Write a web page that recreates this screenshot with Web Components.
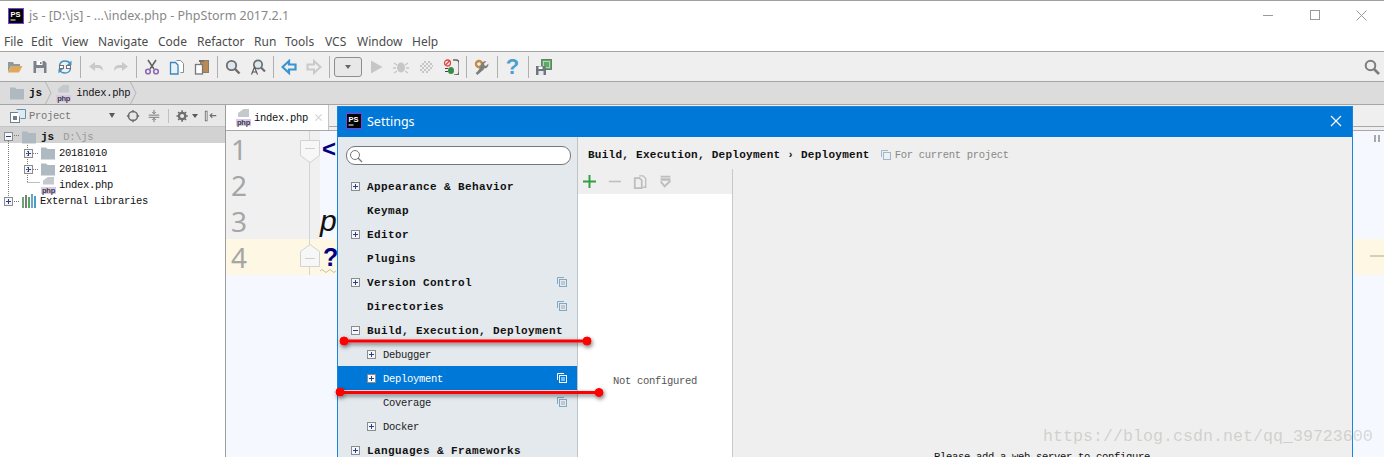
<!DOCTYPE html>
<html>
<head>
<meta charset="utf-8">
<title>PhpStorm settings</title>
<style>
  html, body { margin: 0; padding: 0; background: #fff; }
  body { width: 1384px; height: 457px; overflow: hidden; position: relative; display: flex; flex-direction: column; }
</style>
</head>
<body>
<ide-titlebar></ide-titlebar>
<ide-menubar></ide-menubar>
<ide-toolbar></ide-toolbar>
<ide-crumbs></ide-crumbs>
<ide-workspace>
  <project-panel></project-panel>
  <editor-pane></editor-pane>
</ide-workspace>
<settings-dialog>
  <settings-row slot="nav" bold toggle="plus">Appearance &amp; Behavior</settings-row>
  <settings-row slot="nav" bold>Keymap</settings-row>
  <settings-row slot="nav" bold toggle="plus">Editor</settings-row>
  <settings-row slot="nav" bold>Plugins</settings-row>
  <settings-row slot="nav" bold toggle="plus" project>Version Control</settings-row>
  <settings-row slot="nav" bold project>Directories</settings-row>
  <settings-row slot="nav" bold toggle="minus">Build, Execution, Deployment</settings-row>
  <settings-row slot="nav" sub toggle="plus">Debugger</settings-row>
  <settings-row slot="nav" sub toggle="plus" project selected>Deployment</settings-row>
  <settings-row slot="nav" sub project>Coverage</settings-row>
  <settings-row slot="nav" sub toggle="plus">Docker</settings-row>
  <settings-row slot="nav" bold toggle="plus">Languages &amp; Frameworks</settings-row>
</settings-dialog>
<red-marks></red-marks>
<blog-mark>https://blog.csdn.net/qq_39723600</blog-mark>

<script>
const MONO = '"Liberation Mono", "Noto Sans CJK SC", monospace';

const ICONS = {
  ps: `<rect x=".5" y=".5" width="15" height="15" fill="#000" stroke="#7d3fe0"/><text x="2.400" y="8.600" font-family="Liberation Sans, sans-serif" font-size="7.500" font-weight="700" fill="#fff">PS</text><rect x="2.500" y="11.500" width="5" height="1" fill="#fff"/>`,
  open: `<path d="M1 3h5l1 2h6v2H4l-3 6z" fill="#8e99a2"/><path d="M4 7h11.500L12 13.500H1z" fill="#dfa95b"/>`,
  save: `<path d="M1.500 2h11L14.500 4v10h-13z" fill="#7b8187"/><rect x="4.500" y="2" width="6" height="4" fill="#fff"/><rect x="8" y="3" width="1.500" height="2" fill="#7b8187"/><rect x="4" y="9" width="8" height="5" fill="#e6eaee"/>`,
  sync: `<path d="M2.500 6.500C3 3.500 5 2 8 2s4.500 1 5.500 3" fill="none" stroke="#3f93c9" stroke-width="1.500"/><path d="M13.500 9.500C13 12.500 11 14 8 14s-4.500-1-5.500-3" fill="none" stroke="#3f93c9" stroke-width="1.500"/><path d="M14.500 1.500v4.500H10zM1.500 14.500V10H6z" fill="#3f93c9"/><rect x="2.500" y="6.500" width="4" height="3" fill="#fff" stroke="#707070"/><rect x="9.500" y="6.500" width="4" height="3" fill="#fff" stroke="#707070"/>`,
  undo: `<path d="M7 3v3h3c3 0 5 2 5 6-1.500-2-3-3-5-3H7v3L1 7.500z" fill="#c9c9c9"/>`,
  redo: `<path d="M9 3v3H6c-3 0-5 2-5 6 1.500-2 3-3 5-3h3v3l6-4.500z" fill="#c9c9c9"/>`,
  cut: `<path d="M4 1l6 9M12 1l-6 9" stroke="#5f5f5f" stroke-width="1.500" fill="none"/><circle cx="4" cy="12.500" r="2.300" fill="none" stroke="#8c6bb5" stroke-width="1.600"/><circle cx="12" cy="12.500" r="2.300" fill="none" stroke="#8c6bb5" stroke-width="1.600"/>`,
  copy: `<path d="M7.500 1.500h4l3 3v9h-3" fill="#fff" stroke="#8b8b8b"/><path d="M1.500 3.500h5l2.500 2.500v9H1.500z" fill="#e8f2f9" stroke="#3f86b8" stroke-width="1.300"/>`,
  paste: `<rect x="6.500" y="1.500" width="8" height="12" fill="#b98a56" stroke="#8c7a66"/><rect x="5" y="1" width="5" height="2" fill="#707070"/><rect x="1.500" y="5.500" width="7" height="9.500" fill="#fff" stroke="#777" stroke-width="1.300"/>`,
  find: `<circle cx="6.500" cy="6.500" r="4.700" fill="#dce8f0" stroke="#6d6d6d" stroke-width="1.800"/><path d="M10 10l4.500 4.500" stroke="#6d6d6d" stroke-width="2.400"/>`,
  replace: `<circle cx="8" cy="5.500" r="4.200" fill="#dce8f0" stroke="#6d6d6d" stroke-width="1.700"/><path d="M11 8.500l4 4" stroke="#6d6d6d" stroke-width="2.200"/><path d="M1.500 15.500L4.500 8l3 7.500M2.700 13h3.600" fill="none" stroke="#555" stroke-width="1.100"/>`,
  back: `<path d="M8 2L1.500 8 8 14v-3.500h6.500v-5H8z" fill="none" stroke="#3b94cf" stroke-width="2.200"/>`,
  forward: `<path d="M8 2l6.500 6L8 14v-3.500H1.500v-5H8z" fill="none" stroke="#c9c9c9" stroke-width="2"/>`,
  run: `<path d="M3 1.500L14.500 8 3 14.500z" fill="#c6c6c6"/>`,
  debug: `<ellipse cx="8" cy="8.500" rx="4" ry="5" fill="#c6c6c6"/><path d="M1 4l3 2M15 4l-3 2M0 9h3M16 9h-3M1 14l3-2M15 14l-3-2" stroke="#c6c6c6" stroke-width="1.300"/>`,
  cover: `<path d="M2 6h2v2H2zM2 10h2v2H2zM4 4h2v2H4zM4 8h2v2H4zM4 12h2v2H4zM6 2h2v2H6zM6 6h2v2H6zM6 10h2v2H6zM8 4h2v2H8zM8 8h2v2H8zM8 12h2v2H8zM10 2h2v2h-2zM10 6h2v2h-2zM10 10h2v2h-2zM12 4h2v2h-2zM12 8h2v2h-2zM14 6h1v2h-1z" fill="#c6c6c6"/>`,
  attach: `<circle cx="4.500" cy="4" r="3" fill="none" stroke="#e2483d" stroke-width="1.300"/><path d="M2.500 6l4-4" stroke="#e2483d" stroke-width="1.200"/><path d="M2 9h3v1H2zM2 12h3v1H2z" fill="#444"/><ellipse cx="8" cy="11.500" rx="3" ry="3.500" fill="#3a8a4a"/><path d="M10 1h3a3 3 0 0 1 3 3v9a3 3 0 0 1-3 3h-2" fill="none" stroke="#666" stroke-width="1.300"/>`,
  tools: `<circle cx="5" cy="5" r="3" fill="none" stroke="#c38b46" stroke-width="2.400"/><path d="M3 14.500l6.500-5.500c1 .3 3 .5 4-1 1-1.200 1-2.500.8-3.500L12 7l-1.700-.7L10 4.500 12.500 2.500c-1.500-.5-3.500 0-4.500 1.500" fill="#7d7d7d"/><path d="M2.500 15l7-6" stroke="#7d7d7d" stroke-width="2.500"/>`,
  chipsave: `<rect x="5.500" y=".5" width="10" height="10" fill="#5fa868" stroke="#2f2f2f" stroke-dasharray="1 1"/><rect x="7.500" y="2.500" width="6" height="6" fill="none" stroke="#a8dbae"/><path d="M0 7h8.500L10 8.500V16H0z" fill="#6f767c"/><rect x="2.500" y="7.500" width="4" height="2.500" fill="#fff"/><rect x="2.500" y="12" width="5" height="4" fill="#e6eaee"/>`,
  search: `<circle cx="6.500" cy="6.500" r="4.800" fill="none" stroke="#7d7d7d" stroke-width="2"/><path d="M10 10l5 5" stroke="#7d7d7d" stroke-width="2.600"/>`,
  folder: `<path d="M1 2.500h5L7.500 4H15v10.500H1z" fill="#aeb9c0"/>`,
  project: `<rect x=".5" y="4.500" width="9" height="10" fill="#fff" stroke="#6f7f8c"/><rect x="3" y="8" width="4" height="4" fill="#6f7f8c"/><path d="M6.500 1.500h9v9h-5" fill="#dfeaf2" stroke="#5f92b5"/>`,
  target: `<circle cx="8" cy="8" r="5.200" fill="none" stroke="#6e6e6e" stroke-width="1.800"/><path d="M8 1v3M8 12v3M1 8h3M12 8h3" stroke="#6e6e6e" stroke-width="1.600"/>`,
  collapse: `<path d="M2 7h12M2 9.500h12" stroke="#6e6e6e"/><path d="M8 1v4M6 3.500l2 2 2-2M8 15v-4M6 12.500l2-2 2 2" fill="none" stroke="#6e6e6e"/>`,
  gear: `<circle cx="7" cy="8" r="3.700" fill="none" stroke="#6e6e6e" stroke-width="2.600"/><path d="M7 1.500v2.500M7 12v2.500M.5 8H3M11 8h2.500M2.400 3.400l1.800 1.800M9.800 10.800l1.800 1.800M2.400 12.600l1.800-1.800M9.800 5.200l1.800-1.800" stroke="#6e6e6e" stroke-width="1.800"/>`,
  hide: `<rect x="1.500" y="2.500" width="2" height="11" fill="#fff" stroke="#6e6e6e"/><path d="M14 7.500H7M9.500 5L7 7.500 9.500 10" fill="none" stroke="#6e6e6e" stroke-width="1.300"/>`,
  libs: `<rect x="1" y="4" width="2" height="11" fill="#6aa66f"/><rect x="4" y="2" width="2" height="13" fill="#7d7d7d"/><rect x="7" y="4" width="2" height="11" fill="#58a55c"/><rect x="10" y="1" width="2" height="14" fill="#6aa5c9"/><rect x="13" y="3" width="2" height="12" fill="#4e9bc7"/>`,
  plus: `<path d="M8 0v16M0 8h16" stroke="#2ea043" stroke-width="2.400"/>`,
  minus: `<path d="M1 8h15" stroke="#c0c0c0" stroke-width="2"/>`,
  dup: `<path d="M7 1h4.500l3 3v10H11" fill="#efefef" stroke="#bdbdbd" stroke-width="1.500"/><path d="M2 3.500h5.500l2.500 2.500v9H2z" fill="#efefef" stroke="#bdbdbd" stroke-width="2"/>`,
  saveas: `<path d="M2 1h12v2H2zM2 4h12v3H2z" fill="#bdbdbd"/><path d="M2 8l5 6 7-7" fill="none" stroke="#bdbdbd" stroke-width="2.400"/>`,
  close: `<path d="M3.500 3.500l9 9M12.500 3.500l-9 9" stroke="#d2d2d2" stroke-width="1.600"/>`
};

class IdeIcon extends HTMLElement {
  connectedCallback() {
    const size = this.getAttribute('size') || 16;
    this.attachShadow({ mode: 'open' });
    this.shadowRoot.innerHTML = `
      <style>:host { display: inline-flex; flex: none; width: ${size}px; height: ${size}px; } svg { display: block; }</style>
      <svg width="${size}" height="${size}" viewBox="0 0 16 16">${ICONS[this.getAttribute('name')] || ''}</svg>`;
  }
}
customElements.define('ide-icon', IdeIcon);

class PhpIcon extends HTMLElement {
  constructor() {
    super();
    this.attachShadow({ mode: 'open' });
    this.shadowRoot.innerHTML = `
      <style>
        :host { display: inline-flex; flex-direction: column; align-items: center; flex: none; width: 15px; height: 17px; }
        .doc { width: 11px; height: 8px; background: #c4c9cd; clip-path: polygon(50% 0, 100% 0, 100% 100%, 0 100%, 0 50%); }
        .tag { margin-top: 2px; width: 15px; height: 7px; background: #d8c9ec; color: #3a3a3a; font: 700 7.500px/7px "Liberation Sans", sans-serif; text-align: center; }
      </style>
      <div class="doc"></div><div class="tag">php</div>`;
  }
}
customElements.define('php-icon', PhpIcon);

class IdeTitlebar extends HTMLElement {
  constructor() {
    super();
    this.attachShadow({ mode: 'open' });
    this.shadowRoot.innerHTML = `
      <style>
        :host { display: flex; flex: none; align-items: center; height: 32px; box-sizing: content-box; border-top: 1px solid #a0a0a0; background: #fff; padding-left: 8px; }
        .in { display: flex; flex: 1; align-items: center; height: 29px; margin-bottom: 3px; }
        .title { margin-left: 5px; font: 12.500px "Noto Sans", sans-serif; color: #888; white-space: nowrap; }
        .btns { margin-left: auto; display: flex; align-items: center; }
        .btns svg { display: block; }
      </style>
      <div class="in">
      <ide-icon name="ps"></ide-icon>
      <span class="title">js - [D:\\js] - ...\\index.php - PhpStorm 2017.2.1</span>
      <div class="btns">
        <svg width="11" height="11" style="margin-right:36px"><path d="M0 5.500h10" stroke="#9a9a9a"/></svg>
        <svg width="11" height="11" style="margin-right:35px"><rect x=".5" y=".5" width="9" height="9" fill="none" stroke="#9a9a9a"/></svg>
        <svg width="11" height="11" style="margin-right:17px"><path d="M.5.500l10 10M10.500.500l-10 10" stroke="#9a9a9a"/></svg>
      </div>
      </div>`;
  }
}
customElements.define('ide-titlebar', IdeTitlebar);

class IdeMenubar extends HTMLElement {
  constructor() {
    super();
    this.attachShadow({ mode: 'open' });
    const items = [['File', 27], ['Edit', 31], ['View', 36], ['Navigate', 60], ['Code', 39], ['Refactor', 57], ['Run', 31], ['Tools', 40], ['VCS', 32], ['Window', 55], ['Help', 30]];
    this.shadowRoot.innerHTML = `
      <style>
        :host { display: flex; flex: none; align-items: center; height: 17px; padding: 0 0 1px 4px; background: #fff; border-bottom: 1px solid #a5a5a5; font: 12px "Noto Sans", sans-serif; color: #4c4c4c; }
        span { flex: none; }
      </style>
      ${items.map(([t, w]) => `<span style="width:${w}px">${t}</span>`).join('')}`;
  }
}
customElements.define('ide-menubar', IdeMenubar);

class IdeToolbar extends HTMLElement {
  constructor() {
    super();
    this.attachShadow({ mode: 'open' });
    const b = n => `<span class="b"><ide-icon name="${n}"></ide-icon></span>`;
    const s = '<i class="sep"></i>';
    this.shadowRoot.innerHTML = `
      <style>
        :host { display: flex; flex: none; align-items: center; height: 29px; padding-left: 2px; background: #efefef; border-bottom: 1px solid #a5a5a5; }
        .b { display: flex; flex: none; width: 25px; justify-content: center; }
        .sep { flex: none; width: 1px; height: 22px; margin: 0 2px 0 3px; background: #b0b0b0; }
        .combo { flex: none; width: 26px; height: 18px; margin: 0 1px 0 2px; border: 1px solid #8d8d8d; border-radius: 3px; background: #e8e8e8; display: flex; align-items: center; justify-content: center; }
        .combo::after { content: ""; border: 3.500px solid transparent; border-top: 4px solid #666; border-bottom: 0; }
        .end { margin-left: auto; margin-right: 4px; }
      </style>
      ${b('open')}${b('save')}${b('sync')}${s}${b('undo')}${b('redo')}${s}${b('cut')}${b('copy')}${b('paste')}${s}${b('find')}${b('replace')}${s}${b('back')}${b('forward')}${s}
      <span class="combo"></span>
      ${b('run')}${b('debug')}${b('cover')}${b('attach')}${s}${b('tools')}${s}
      <span class="b" style="font:700 22px/22px 'Liberation Sans',sans-serif;color:#4a9fd0">?</span>${s}${b('chipsave')}
      <ide-icon class="end" name="search"></ide-icon>`;
  }
}
customElements.define('ide-toolbar', IdeToolbar);

class IdeCrumbs extends HTMLElement {
  constructor() {
    super();
    this.attachShadow({ mode: 'open' });
    const chev = '<svg class="chev" width="7" height="22"><path d="M.5 0l5.500 11L.5 22" fill="none" stroke="#b4b4b4"/></svg>';
    this.shadowRoot.innerHTML = `
      <style>
        :host { display: flex; flex: none; align-items: center; height: 22px; padding-left: 9px; background: #dcdcdc; border-bottom: 1px solid #a5a5a5; font: 10.500px ${MONO}; color: #111; letter-spacing: -.3px; }
        .js { margin: 0 3px 0 4px; font-weight: 700; font-size: 11px; letter-spacing: 0; }
        .chev { flex: none; }
      </style>
      <ide-icon name="folder"></ide-icon><span class="js">js</span>${chev}
      <php-icon style="margin:0 5px 0 4px"></php-icon><span>index.php</span>${chev}`;
  }
}
customElements.define('ide-crumbs', IdeCrumbs);

class IdeWorkspace extends HTMLElement {
  constructor() {
    super();
    this.attachShadow({ mode: 'open' });
    this.shadowRoot.innerHTML = `
      <style>:host { display: flex; flex: 1; min-height: 0; background: #fff; }</style>
      <slot></slot>`;
  }
}
customElements.define('ide-workspace', IdeWorkspace);

class TreeRow extends HTMLElement {
  constructor() {
    super();
    this.attachShadow({ mode: 'open' });
    const toggle = this.getAttribute('toggle');
    const indent = +this.getAttribute('indent') || 0;
    const sign = toggle === 'minus' ? 'M2 4.500h5' : 'M2 4.500h5M4.500 2v5';
    this.shadowRoot.innerHTML = `
      <style>
        :host { display: flex; align-items: center; height: 16px; box-sizing: border-box; padding-left: ${indent}px; font: 10.500px/16px ${MONO}; letter-spacing: -.3px; color: #111; white-space: nowrap; }
        :host([active]) { background: #d2d2d2; padding-top: 3px; margin-bottom: 2px; }
        svg { flex: none; margin-right: 3px; }
        .pad { flex: none; width: 12px; }
        ::slotted(*) { margin-right: 3px; }
      </style>
      ${toggle ? `<svg width="9" height="9"><rect x=".5" y=".5" width="8" height="8" fill="#f4f6f8" stroke="#8c8c8c"/><path d="${sign}" stroke="#2a3f8f"/></svg>` : '<span class="pad"></span>'}
      <slot></slot>`;
  }
}
customElements.define('tree-row', TreeRow);

class ProjectPanel extends HTMLElement {
  constructor() {
    super();
    this.attachShadow({ mode: 'open' });
    this.shadowRoot.innerHTML = `
      <style>
        :host { display: flex; flex-direction: column; flex: none; width: 225px; border-right: 1px solid #9d9d9d; background: #fff; position: relative; }
        .head { display: flex; align-items: center; height: 21px; padding-left: 10px; background: #e8e8e8; border-bottom: 1px solid #c4c4c4; font: 10.500px ${MONO}; letter-spacing: -.3px; color: #777; }
        .head .name { margin-left: 3px; margin-right: 38px; }
        .tri { width: 0; height: 0; border: 3.500px solid transparent; border-top: 5px solid #5a5a5a; border-bottom: 0; flex: none; }
        .sep { width: 1px; height: 14px; background: #c0c0c0; flex: none; }
        .tree { position: relative; }
        .dim { color: #999; margin-left: 6px; }
        b { font-size: 11px; letter-spacing: 0; }
        .guide { position: absolute; left: 0; top: 0; pointer-events: none; }
      </style>
      <div class="head">
        <ide-icon name="project"></ide-icon><span class="name">Project</span>
        <i class="tri" style="margin-right:11px"></i>
        <ide-icon name="target" size="14" style="margin-right:7px"></ide-icon>
        <ide-icon name="collapse" size="14"></ide-icon>
        <i class="sep" style="margin:0 7px"></i>
        <ide-icon name="gear" size="14"></ide-icon>
        <i class="tri" style="border-width:3px;border-top-width:4px;margin:0 6px 0 2px"></i>
        <ide-icon name="hide" size="14"></ide-icon>
      </div>
      <div class="tree">
        <tree-row toggle="minus" indent="4" active><ide-icon name="folder" style="margin-left:5px;margin-right:4px"></ide-icon><b>js</b><span class="dim">D:\\js</span></tree-row>
        <tree-row toggle="plus" indent="24"><ide-icon name="folder" style="margin-left:4px"></ide-icon>20181010</tree-row>
        <tree-row toggle="plus" indent="24"><ide-icon name="folder" style="margin-left:4px"></ide-icon>20181011</tree-row>
        <tree-row indent="29"><php-icon></php-icon>index.php</tree-row>
        <tree-row toggle="plus" indent="4"><ide-icon name="libs" style="margin-left:5px"></ide-icon>External Libraries</tree-row>
        <svg class="guide" width="60" height="90">
          <path d="M8.500 14V69M27.500 18V55M27.500 55.500H40M14 8.500h6M33 26.500h6M33 42.500h6M14 74.500h6" stroke="#7a7a7a" stroke-dasharray="1 1" fill="none"/>
        </svg>
      </div>`;
  }
}
customElements.define('project-panel', ProjectPanel);

class EditorPane extends HTMLElement {
  constructor() {
    super();
    this.attachShadow({ mode: 'open' });
    this.shadowRoot.innerHTML = `
      <style>
        :host { display: flex; flex-direction: column; flex: 1; min-width: 0; position: relative; }
        .tabs { flex: none; display: flex; height: 25px; background: #efefef; border-bottom: 1px solid #a8a8a8; }
        .tab { display: flex; align-items: center; width: 103px; padding-left: 10px; box-sizing: border-box; background: #fff; border-right: 1px solid #c4c4c4; font: 10.500px ${MONO}; letter-spacing: -.3px; color: #111; }
        .tab ide-icon { margin-left: 5px; }
        .rest { flex: 1; height: 21px; border-bottom: 1px solid #a8a8a8; }
        .lines { flex: 1; background: #f5f9ff; position: relative; }
        .line { display: flex; height: 36px; position: relative; }
        .line.cur { background: #fdf7e3; }
        .num { width: 84px; flex: none; box-sizing: border-box; padding-left: 5px; background: #f0f0f0; border-right: 1px solid #d4d4d4; font: 28px/36px "Noto Sans", sans-serif; color: #a6a6a6; }
        .line.cur .num { background: none; }
        .fold { flex: none; width: 10px; background: #f0f0f0; }
        .line.cur .fold { background: none; }
        .code { padding-left: 2px; font: 700 24px/36px "Liberation Sans", sans-serif; color: #000080; }
        .code.q { font-weight: 700; font-size: 25px; padding-left: 3px; }
        .code.p { font: italic 400 30px/36px "Liberation Sans", sans-serif; color: #111; padding-left: 0; }
        .marker { position: absolute; left: 74px; }
        .wave { position: absolute; left: 94px; top: 29px; }
        .end { position: absolute; right: 0; top: 16px; width: 14px; height: 2px; background: #d8d0a8; }
        .pause { position: absolute; right: 4px; top: 4px; }
      </style>
      <div class="tabs"><div class="tab"><php-icon></php-icon><span style="margin-left:3px">index.php</span><ide-icon name="close" size="11"></ide-icon></div><div class="rest"></div></div>
      <div class="lines">
        <svg class="pause" width="6" height="7"><path d="M0 0h2v7H0zM4 0h2v7H4z" fill="#a8a8a8"/></svg>
        <div class="line"><span class="num">1</span><span class="fold"></span><span class="code">&lt;</span>
          <svg class="marker" style="top:9px" width="20" height="24"><path d="M.5.500h19v15l-9.500 7-9.500-7z" fill="#f7f7f7" stroke="#d2d2d2"/><path d="M5 8.500h10" stroke="#cfcfcf"/></svg></div>
        <div class="line"><span class="num">2</span><span class="fold"></span><span class="code"></span></div>
        <div class="line"><span class="num">3</span><span class="fold"></span><span class="code p">p</span></div>
        <div class="line cur"><span class="num">4</span><span class="fold"></span><span class="code q">?</span>
          <svg class="marker" style="top:5px" width="20" height="24"><path d="M.5 22.500h19v-15L10 .5.500 7.500z" fill="#f7f7f7" stroke="#d2d2d2"/><path d="M5 14.500h10" stroke="#cfcfcf"/></svg>
          <svg class="wave" width="18" height="5"><path d="M0 3q2-3 4 0t4 0 4 0 4 0" fill="none" stroke="#c6c0a8"/></svg>
          <i class="end"></i></div>
      </div>`;
  }
}
customElements.define('editor-pane', EditorPane);

class SettingsRow extends HTMLElement {
  constructor() {
    super();
    this.attachShadow({ mode: 'open' });
    const t = this.getAttribute('toggle');
    const sign = t === 'minus' ? 'M2 4.500h5' : 'M2 4.500h5M4.500 2v5';
    const sel = this.hasAttribute('selected');
    this.shadowRoot.innerHTML = `
      <style>
        :host { display: flex; align-items: center; height: 24px; box-sizing: border-box; padding: 1px 0 0 13px; color: #222; font: 10.500px ${MONO}; letter-spacing: -.3px; white-space: nowrap; position: relative; }
        :host([bold]) { font-weight: 700; font-size: 11px; letter-spacing: .4px; color: #111; }
        :host([sub]) { padding-left: 29px; }
        :host([selected]) { background: #0078d7; color: #fff; }
        .box { flex: none; width: 9px; height: 9px; margin-right: 7px; display: block; }
        .none { flex: none; width: 16px; }
        .proj { position: absolute; right: 10px; top: 7px; }
      </style>
      ${t ? `<svg class="box" width="9" height="9"><rect x=".5" y=".5" width="8" height="8" fill="#f4f6f8" stroke="#8c8c8c"/><path d="${sign}" stroke="#2a3f8f"/></svg>` : '<span class="none"></span>'}
      <slot></slot>
      ${this.hasAttribute('project') ? `<svg class="proj" width="10" height="10"><path d="M.5 7V.5H7" fill="none" stroke="${sel ? '#fff' : '#7fa9c6'}"/><rect x="2.500" y="2.500" width="7" height="7" fill="none" stroke="${sel ? '#fff' : '#7fa9c6'}"/><path d="M4 5h4M4 7h4" stroke="${sel ? '#fff' : '#9ab'}"/></svg>` : ''}`;
  }
}
customElements.define('settings-row', SettingsRow);

class SettingsDialog extends HTMLElement {
  constructor() {
    super();
    this.attachShadow({ mode: 'open' });
    this.shadowRoot.innerHTML = `
      <style>
        :host { position: absolute; left: 337px; top: 106px; width: 1016px; height: 360px; box-sizing: border-box; border: 1px solid #1a84dc; border-bottom: 0; display: flex; flex-direction: column; background: #efefef; }
        .bar { flex: none; display: flex; align-items: center; height: 30px; box-sizing: border-box; background: #0078d7; color: #fff; padding: 0 0 2px 8px; font: 12.500px "Noto Sans", sans-serif; }
        .bar span { margin-left: 5px; }
        .bar svg { margin-left: auto; margin-right: 10px; }
        .body { flex: 1; display: flex; min-height: 0; }
        nav { flex: none; width: 239px; background: #e4e9ee; border-right: 1px solid #c0c4c8; }
        .find { display: flex; align-items: center; height: 17px; width: 222px; margin: 9px 0 9px 8px; border: 1px solid #777; border-radius: 9px; background: #fff; padding-left: 1px; }
        .main { flex: 1; min-width: 0; display: flex; flex-direction: column; position: relative; }
        .path { flex: none; display: flex; align-items: center; height: 32px; padding: 4px 0 0 10px; box-sizing: border-box; font: 700 11px ${MONO}; letter-spacing: .27px; color: #111; white-space: pre; }
        .path svg { margin: 0 4px 0 11px; }
        .path em { font: 10.500px ${MONO}; letter-spacing: -.3px; color: #888; }
        .split { flex: 1; display: flex; min-height: 0; }
        .list { flex: none; width: 154px; border-right: 1px solid #c8c8c8; display: flex; flex-direction: column; }
        .tools { flex: none; height: 25px; display: flex; align-items: center; gap: 12px; padding-left: 5px; }
        .items { flex: 1; background: #fff; padding-top: 181px; padding-left: 35px; font: 10.500px ${MONO}; letter-spacing: -.3px; color: #555; white-space: nowrap; }
        .detail { flex: 1; padding: 279px 0 0 201px; font: 10.500px/18px ${MONO}; letter-spacing: -.3px; color: #111; white-space: nowrap; }
      </style>
      <div class="bar">
        <ide-icon name="ps"></ide-icon><span>Settings</span>
        <svg width="12" height="12"><path d="M1 1l10 10M11 1L1 11" stroke="#fff" stroke-width="1.200"/></svg>
      </div>
      <div class="body">
        <nav>
          <div class="find"><svg width="16" height="16"><circle cx="7" cy="7" r="4.500" fill="none" stroke="#777"/><path d="M10 10l4 4" stroke="#777" stroke-width="1.200"/></svg></div>
          <slot name="nav"></slot>
        </nav>
        <div class="main">
          <div class="path">Build, Execution, Deployment &#8250; Deployment<svg width="10" height="10"><path d="M.5 7V.5H7" fill="none" stroke="#9db8cc"/><rect x="2.500" y="2.500" width="7" height="7" fill="none" stroke="#9db8cc"/></svg><em>For current project</em></div>
          <div class="split">
            <div class="list">
              <div class="tools">
                <ide-icon name="plus" size="13"></ide-icon><ide-icon name="minus" size="13"></ide-icon><ide-icon name="dup" size="14"></ide-icon><ide-icon name="saveas" size="13"></ide-icon>
              </div>
              <div class="items">Not configured</div>
            </div>
            <div class="detail">Please add a web server to configure</div>
          </div>
        </div>
      </div>`;
  }
}
customElements.define('settings-dialog', SettingsDialog);

class RedMarks extends HTMLElement {
  constructor() {
    super();
    this.attachShadow({ mode: 'open' });
    this.shadowRoot.innerHTML = `
      <style>:host { position: absolute; left: 0; top: 0; width: 1384px; height: 457px; pointer-events: none; } svg { display: block; }</style>
      <svg width="1384" height="457">
        <defs><filter id="sh" x="-5%" y="-200%" width="110%" height="500%"><feDropShadow dx="1" dy="2" stdDeviation="2" flood-color="#000" flood-opacity=".55"/></filter></defs>
        <g fill="#f00" stroke="#f00" filter="url(#sh)">
          <path d="M344 341H587" stroke-width="3"/><circle cx="344" cy="341" r="4"/><circle cx="587" cy="341" r="4"/>
        </g>
        <g fill="#f00" stroke="#f00" filter="url(#sh)">
          <path d="M340 392.500H599" stroke-width="3"/><circle cx="340" cy="392" r="4"/><circle cx="599" cy="392.500" r="4"/>
        </g>
      </svg>`;
  }
}
customElements.define('red-marks', RedMarks);

class BlogMark extends HTMLElement {
  constructor() {
    super();
    this.attachShadow({ mode: 'open' });
    this.shadowRoot.innerHTML = `
      <style>:host { position: absolute; left: 1043px; top: 426px; font: 16.670px/22px ${MONO}; color: rgba(150,150,140,.35); white-space: nowrap; pointer-events: none; }</style>
      <slot></slot>`;
  }
}
customElements.define('blog-mark', BlogMark);
</script>
</body>
</html>
